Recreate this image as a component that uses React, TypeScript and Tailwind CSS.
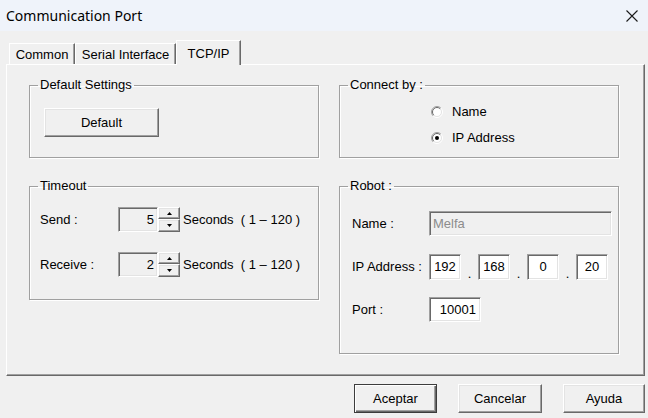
import React from 'react';

const raised =
  'border border-t-white border-l-white border-r-[#696969] border-b-[#696969] shadow-[inset_-1px_-1px_0_#a0a0a0,inset_1px_1px_0_#e3e3e3] bg-[#f0f0f0]';
const sunken =
  'border border-t-[#a0a0a0] border-l-[#a0a0a0] border-r-white border-b-white shadow-[inset_1px_1px_0_#696969,inset_-1px_-1px_0_#e3e3e3]';

function Group({ label, className, children }: { label: string; className: string; children?: React.ReactNode }) {
  return (
    <fieldset
      className={`m-0 p-0 min-w-0 border border-[#a0a0a0] shadow-[inset_1px_1px_0_#fff,1px_1px_0_#fff] ${className}`}
    >
      <legend className="ml-[8px] px-[2px] leading-[16px]">{label}</legend>
      {children}
    </fieldset>
  );
}

function Radio({ checked }: { checked?: boolean }) {
  return (
    <svg width="12" height="12" viewBox="0 0 12 12">
      <circle cx="6" cy="6" r="5" fill="#fff" />
      <path d="M2.1 9.9 A5.5 5.5 0 0 1 9.9 2.1" fill="none" stroke="#a0a0a0" strokeWidth="1" />
      <path d="M9.9 2.1 A5.5 5.5 0 0 1 2.1 9.9" fill="none" stroke="#ffffff" strokeWidth="1" />
      <path d="M2.8 9.2 A4.5 4.5 0 0 1 9.2 2.8" fill="none" stroke="#696969" strokeWidth="1" />
      <path d="M9.2 2.8 A4.5 4.5 0 0 1 2.8 9.2" fill="none" stroke="#e3e3e3" strokeWidth="1" />
      {checked && <circle cx="6" cy="6" r="2" fill="#000" />}
    </svg>
  );
}

function Spinner() {
  return (
    <div className="flex flex-col w-[22px] h-[25px]">
      <div className={`${raised} h-[12px] flex items-center justify-center`}>
        <svg width="5" height="3" viewBox="0 0 5 3">
          <path d="M0 3 L2.5 0 L5 3 Z" fill="#000" />
        </svg>
      </div>
      <div className={`${raised} h-[13px] flex items-center justify-center`}>
        <svg width="5" height="3" viewBox="0 0 5 3">
          <path d="M0 0 L5 0 L2.5 3 Z" fill="#000" />
        </svg>
      </div>
    </div>
  );
}

function TimeoutRow({ label, value, className }: { label: string; value: string; className: string }) {
  return (
    <div className={`flex items-center ml-[10px] ${className}`}>
      <span className="w-[78px]">{label}</span>
      <div className={`${sunken} bg-[#f0f0f0] w-[40px] h-[25px] flex items-center justify-end pr-[3px]`}>{value}</div>
      <Spinner />
      <span className="ml-[3px] whitespace-pre">Seconds  ( 1 – 120 )</span>
    </div>
  );
}

function IpBox({ value }: { value: string }) {
  return (
    <div className={`${sunken} bg-white w-[32px] h-[26px] flex items-center justify-center`}>{value}</div>
  );
}

function Dot() {
  return <div className="w-[17px] h-[26px] flex items-end justify-center pb-[1px] leading-[10px]">.</div>;
}

export default function App() {
  return (
    <div className="w-[648px] h-[418px] bg-[#f0f0f0] text-[13px] text-black font-['Liberation_Sans',Arial,sans-serif] overflow-hidden">
      <div className="h-[31px] bg-[#eff3fa] flex items-center justify-between pl-[6px] pr-[10px]">
        <span className="font-['Noto_Sans',sans-serif] text-[14px] leading-none">Communication Port</span>
        <svg width="12" height="12" viewBox="0 0 12 12">
          <path d="M0.5 0.5 L11.5 11.5 M11.5 0.5 L0.5 11.5" stroke="#1a1a1a" strokeWidth="1.1" />
        </svg>
      </div>

      <div className="pl-[6px] pr-[3px] pt-[9px]">
        <div className="flex items-end h-[24px] pl-[3px]">
          <div className="w-[66px] h-[21px] border border-b-0 border-t-white border-l-white border-r-[#696969] shadow-[inset_-1px_0_0_#a0a0a0] flex items-center justify-center pt-[1px]">
            Common
          </div>
          <div className="w-[101px] h-[21px] border border-b-0 border-t-white border-l-white border-r-[#696969] shadow-[inset_-1px_0_0_#a0a0a0] flex items-center justify-center pt-[1px]">
            Serial Interface
          </div>
          <div className="relative z-10 -mb-px w-[65px] h-[25px] bg-[#f0f0f0] border border-b-0 border-t-white border-l-white border-r-[#696969] shadow-[inset_-1px_0_0_#a0a0a0] flex items-start justify-center pt-[3px]">
            TCP/IP
          </div>
        </div>

        <div className="h-[312px] border border-t-white border-l-white border-r-[#696969] border-b-[#696969] shadow-[inset_-1px_-1px_0_#a0a0a0] pl-[22px] pt-[12px]">
          <div className="grid grid-cols-[290px_280px] gap-x-[20px] gap-y-[20px] items-start">
            <Group label="Default Settings" className="h-[81px]">
              <button className={`${raised} ml-[14px] mt-[15px] w-[115px] h-[29px] block`}>Default</button>
            </Group>

            <Group label="Connect by :" className="h-[81px]">
              <div className="ml-[91px] mt-[6px] flex flex-col">
                <div className="flex items-center h-[26px] gap-[9px]">
                  <Radio />
                  <span>Name</span>
                </div>
                <div className="flex items-center h-[26px] gap-[9px]">
                  <Radio checked />
                  <span>IP Address</span>
                </div>
              </div>
            </Group>

            <Group label="Timeout" className="h-[122px]">
              <TimeoutRow label="Send :" value="5" className="mt-[13px]" />
              <TimeoutRow label="Receive :" value="2" className="mt-[20px]" />
            </Group>

            <Group label="Robot :" className="h-[176px]">
              <div className="ml-[12px] mt-[17px] flex items-center">
                <span className="w-[77px]">Name :</span>
                <div className={`${sunken} bg-[#f0f0f0] w-[183px] h-[25px] flex items-center pl-[3px] text-[#8c8c8c]`}>
                  Melfa
                </div>
              </div>
              <div className="ml-[12px] mt-[18px] flex items-center">
                <span className="w-[77px]">IP Address :</span>
                <IpBox value="192" />
                <Dot />
                <IpBox value="168" />
                <Dot />
                <IpBox value="0" />
                <Dot />
                <IpBox value="20" />
              </div>
              <div className="ml-[12px] mt-[17px] flex items-center">
                <span className="w-[77px]">Port :</span>
                <div className={`${sunken} bg-white w-[52px] h-[25px] flex items-center justify-end pr-[4px]`}>10001</div>
              </div>
            </Group>
          </div>
        </div>
      </div>

      <div className="flex justify-end gap-[21px] pr-[3px] mt-[8px]">
        <button className="w-[83px] h-[29px] bg-[#f0f0f0] border border-[#3c3c3c] shadow-[inset_1px_1px_0_#fff,inset_-1px_-1px_0_#696969,inset_-2px_-2px_0_#a0a0a0]">
          Aceptar
        </button>
        <button className={`${raised} w-[84px] h-[29px]`}>Cancelar</button>
        <button className={`${raised} w-[82px] h-[29px]`}>Ayuda</button>
      </div>
    </div>
  );
}
